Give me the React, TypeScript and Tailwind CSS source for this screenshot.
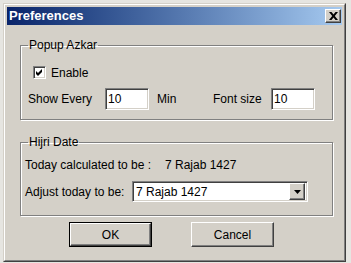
// classic win9x bevels
const sunken =
  'border border-t-[#808080] border-l-[#808080] border-b-white border-r-white shadow-[inset_1px_1px_0_#404040,inset_-1px_-1px_0_#d4d0c8]';
const raised =
  'border border-t-white border-l-white border-b-[#404040] border-r-[#404040] shadow-[inset_-1px_-1px_0_#808080]';
const etched = 'border border-[#808080] shadow-[inset_1px_1px_0_#fff,1px_1px_0_#fff]';

function Checkbox({ checked }: { checked: boolean }) {
  return (
    <div className={`w-[13px] h-[13px] bg-white ${sunken} flex items-center justify-center`}>
      {checked && (
        <svg width="7" height="7" viewBox="0 0 7 7">
          <path d="M0 2 L2 4 L6 0 V3 L2 7 L0 5 Z" fill="#000" />
        </svg>
      )}
    </div>
  );
}

export default function App() {
  return (
    <div className="w-[351px] h-[263px] bg-[#e6e5e1] pt-[3px] pl-[3px] font-['Liberation_Sans',Arial,sans-serif] text-[12px] text-black leading-[14px]">
      <div className="w-[343px] h-[259px] bg-[#d4d0c8] border border-t-[#d4d0c8] border-l-[#d4d0c8] border-b-[#404040] border-r-[#404040]">
        <div className="h-full border border-t-white border-l-white border-b-[#808080] border-r-[#808080] p-[2px] flex flex-col">
          {/* title bar */}
          <div className="h-[18px] flex items-center bg-gradient-to-r from-[#0a246a] to-[#a6caf0] pl-[2px] pr-[1px]">
            <span className="flex-1 text-white font-bold text-[13px] leading-[18px]">Preferences</span>
            <button className={`w-[16px] h-[14px] bg-[#d4d0c8] ${raised} flex items-center justify-center`}>
              <svg width="9" height="8" viewBox="0 0 9 8">
                <path d="M0 0 H2.5 L4.5 2.5 L6.5 0 H9 L5.8 4 L9 8 H6.5 L4.5 5.5 L2.5 8 H0 L3.2 4 Z" fill="#000" />
              </svg>
            </button>
          </div>

          {/* Popup Azkar */}
          <fieldset className={`ml-[13px] mt-[13px] w-[313px] px-[7px] pt-[14px] pb-[9px] ${etched}`}>
            <legend className="px-[1px]">Popup Azkar</legend>
            <div className="flex items-center h-[13px] ml-[5px]">
              <Checkbox checked />
              <span className="ml-[5px]">Enable</span>
            </div>
            <div className="flex items-center mt-[9px] h-[22px]">
              <span className="w-[77px]">Show Every</span>
              <div className={`w-[44px] h-[22px] bg-white ${sunken} flex items-center pl-[2px]`}>10</div>
              <span className="ml-[8px] w-[56px]">Min</span>
              <span className="w-[58px]">Font size</span>
              <div className={`w-[44px] h-[22px] bg-white ${sunken} flex items-center pl-[2px]`}>10</div>
            </div>
          </fieldset>

          {/* Hijri Date */}
          <fieldset className={`ml-[13px] mt-[15px] w-[313px] px-[4px] pt-[9px] pb-[13px] ${etched}`}>
            <legend className="ml-[3px] px-[1px]">Hijri Date</legend>
            <div className="flex items-center h-[14px]">
              <span className="w-[140px]">Today calculated to be :</span>
              <span>7 Rajab 1427</span>
            </div>
            <div className="flex items-center mt-[9px] h-[21px]">
              <span className="w-[107px]">Adjust today to be:</span>
              <div className={`w-[176px] h-[21px] bg-white ${sunken} flex items-center p-[2px]`}>
                <span className="flex-1 pl-[1px]">7 Rajab 1427</span>
                <div className={`w-[16px] h-[17px] bg-[#d4d0c8] ${raised} flex items-center justify-center`}>
                  <svg width="7" height="4" viewBox="0 0 7 4">
                    <path d="M0 0 H7 L3.5 4 Z" fill="#000" />
                  </svg>
                </div>
              </div>
            </div>
          </fieldset>

          {/* buttons */}
          <div className="flex mt-[6px] ml-[62px] gap-[39px]">
            <div className="w-[83px] h-[25px] border border-black">
              <button className={`w-full h-full bg-[#d4d0c8] ${raised}`}>OK</button>
            </div>
            <button className={`w-[83px] h-[25px] bg-[#d4d0c8] ${raised}`}>Cancel</button>
          </div>
        </div>
      </div>
    </div>
  );
}
